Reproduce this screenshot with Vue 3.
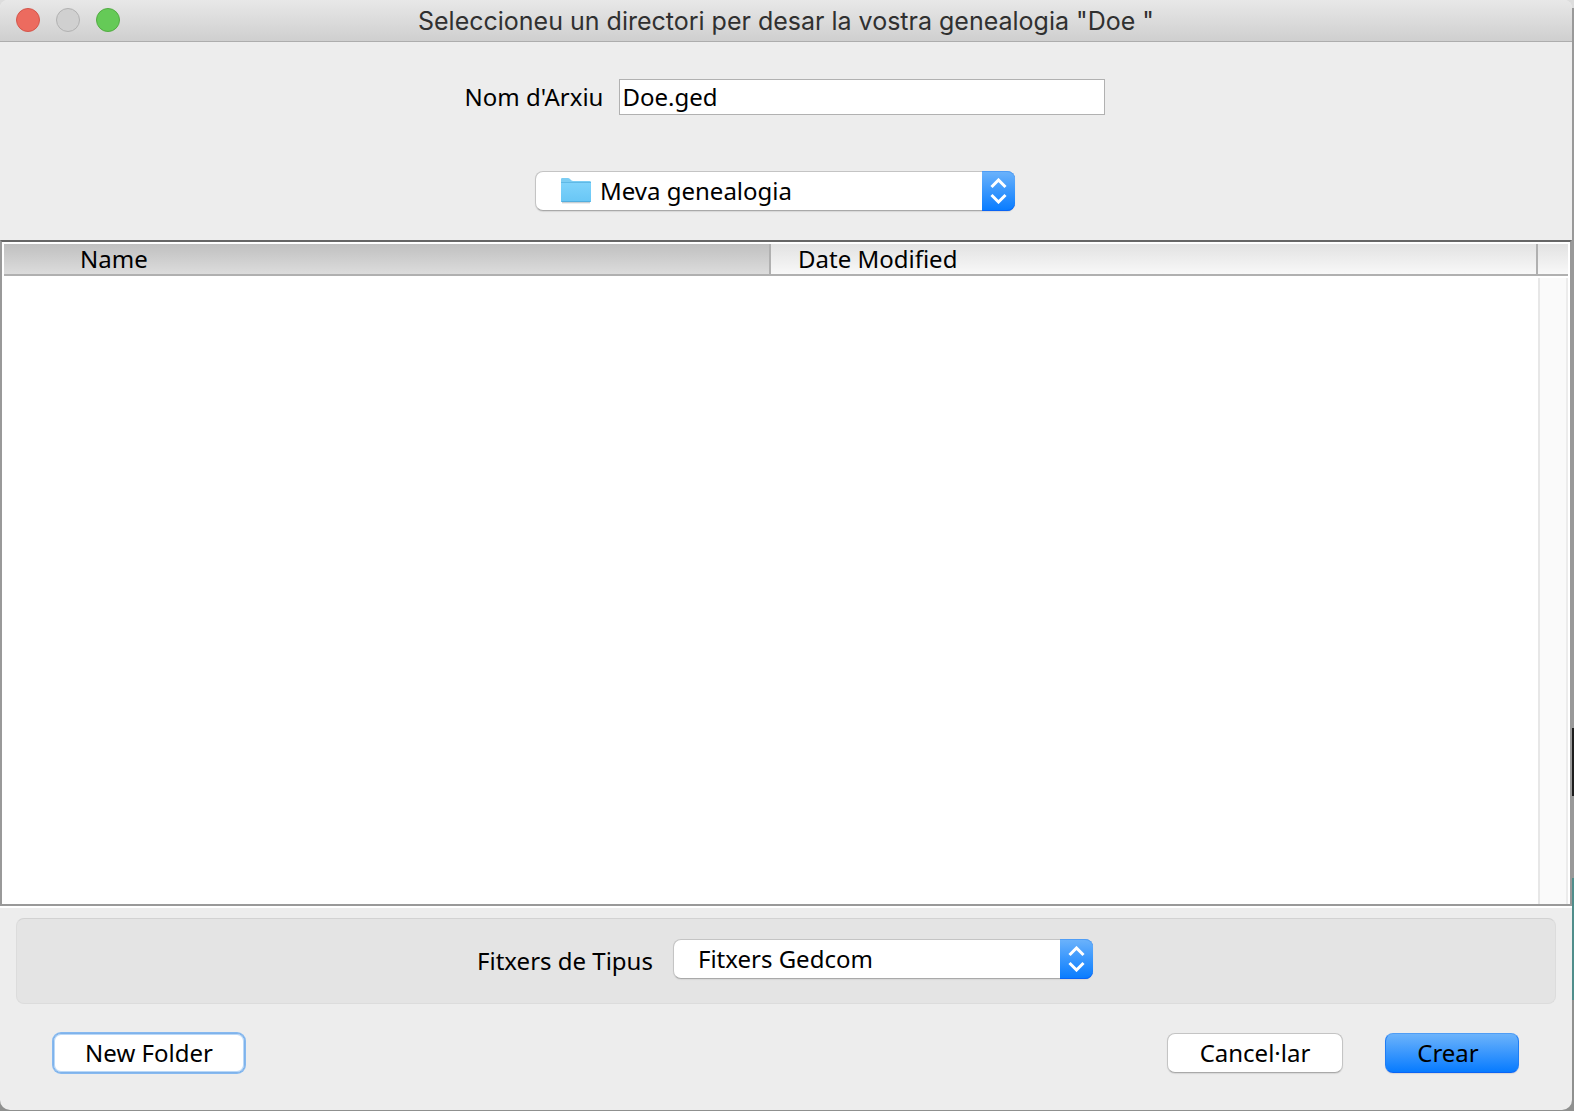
<script setup>
import { ref } from 'vue'

const fileName = ref('Doe.ged')
const folder = ref('Meva genealogia')
const fileType = ref('Fitxers Gedcom')
</script>

<template>
  <div class="desktop">
    <main class="dialog">
      <header class="titlebar">
        <div class="lights">
          <button class="light close" aria-label="Close"></button>
          <button class="light minimize" aria-label="Minimize" disabled></button>
          <button class="light zoom" aria-label="Zoom"></button>
        </div>
        <h1 class="title">Seleccioneu un directori per desar la vostra genealogia "Doe "</h1>
      </header>

      <div class="name-row">
        <label for="file-name">Nom d'Arxiu</label>
        <input id="file-name" v-model="fileName" class="name-input" type="text" />
      </div>

      <div class="folder-row">
        <div class="combo folder-combo">
          <select v-model="folder" aria-label="Folder">
            <option>Meva genealogia</option>
          </select>
          <svg class="folder-icon" width="32" height="26" viewBox="0 0 32 26" aria-hidden="true">
            <defs>
              <linearGradient id="folder-face" x1="0" y1="0" x2="0" y2="1">
                <stop offset="0" stop-color="#7fd3fb" />
                <stop offset="1" stop-color="#68c6f5" />
              </linearGradient>
            </defs>
            <path d="M2 24.6h28" stroke="#c9cfd3" stroke-width="1.5" />
            <path d="M1 23V1.200Q1 0 2.200 0H8q1 0 1.800.8l1.400 1.400q.8.8 2 .8H29.500Q31 3 31 4.200V23q0 1-1 1H2q-1 0-1-1z" fill="#7ccdf3" />
            <path d="M1 4.500h30V23q0 1-1 1H2q-1 0-1-1z" fill="url(#folder-face)" />
            <path d="M1 4.500h30" stroke="#5fb9e6" />
            <path d="M1.500 23.500h29" stroke="#52aede" />
          </svg>
          <span class="arrows">
            <svg width="17" height="26" viewBox="0 0 17 26" aria-hidden="true">
              <path d="M1.500 9 8.500 2 15.500 9M1.500 17 8.500 24 15.500 17" />
            </svg>
          </span>
        </div>
      </div>

      <section class="list">
        <table>
          <colgroup>
            <col />
            <col />
            <col class="corner" />
          </colgroup>
          <thead>
            <tr>
              <th class="sorted" scope="col">Name</th>
              <th class="date" scope="col">Date Modified</th>
              <td></td>
            </tr>
          </thead>
        </table>
        <div class="files">
          <div class="track"></div>
        </div>
      </section>

      <section class="type-panel">
        <label for="file-type">Fitxers de Tipus</label>
        <div class="combo type-combo">
          <select id="file-type" v-model="fileType">
            <option>Fitxers Gedcom</option>
          </select>
          <span class="arrows">
            <svg width="17" height="26" viewBox="0 0 17 26" aria-hidden="true">
              <path d="M1.500 9 8.500 2 15.500 9M1.500 17 8.500 24 15.500 17" />
            </svg>
          </span>
        </div>
      </section>

      <footer class="actions">
        <button class="btn new-folder">New Folder</button>
        <button class="btn cancel">Cancel·lar</button>
        <button class="btn create">Crear</button>
      </footer>
    </main>
  </div>
</template>

<style>
body {
  margin: 0;
}
</style>

<style scoped>
.desktop {
  display: flex;
  min-height: 100vh;
  box-sizing: border-box;
  padding: 0 2px 1px 0;
  background: linear-gradient(
    #ddd 0 8px,
    #999 8px 728px,
    #1c1c1c 728px 796px,
    #999 796px 878px,
    #4f8d8b 878px 1000px,
    #8f908f 1000px
  );
  font-family: "Noto Sans", "Open Sans", sans-serif;
  font-size: 24px;
  line-height: 32px;
  color: #000;
}

.dialog {
  flex: 1;
  min-width: 0;
  display: flex;
  flex-direction: column;
  background: #ededed;
  border-radius: 8px 8px 10px 10px;
  overflow: hidden;
}

.titlebar {
  display: grid;
  grid-template-columns: 120px 1fr 120px;
  align-items: center;
  height: 42px;
  box-sizing: border-box;
  padding: 0 0 1px;
  background: linear-gradient(#e8e8e8, #cfcfcf);
  border-bottom: 1px solid #adadad;
}

.lights {
  display: flex;
  gap: 16px;
  padding-left: 16px;
}

.light {
  width: 24px;
  height: 24px;
  padding: 0;
  border-radius: 50%;
  border: 1px solid;
}

.close {
  background: #ec6b5f;
  border-color: #d3564b;
}

.minimize {
  background: #d0d0d0;
  border-color: #b1b1b1;
}

.zoom {
  background: #65ca57;
  border-color: #53ab43;
}

.title {
  margin: 0;
  padding-top: 2px;
  text-align: center;
  font-family: Inter, Roboto, sans-serif;
  font-size: 25px;
  line-height: 32px;
  font-weight: 400;
  color: #303030;
  white-space: nowrap;
}

.name-row {
  display: flex;
  justify-content: center;
  align-items: center;
  gap: 16px;
  padding: 37px 2px 0 0;
}

.name-input {
  width: 486px;
  height: 36px;
  box-sizing: border-box;
  padding: 0 2px 2px;
  border: 1px solid #b1b1b1;
  border-radius: 0;
  background: #fff;
  color: #000;
  font: inherit;
  outline: none;
}

.folder-row {
  display: flex;
  justify-content: center;
  padding: 56px 22px 29px 0;
}

.combo {
  position: relative;
  height: 40px;
}

.folder-combo {
  width: 480px;
}

.type-combo {
  width: 420px;
}

.combo select {
  appearance: none;
  display: block;
  width: 100%;
  height: 40px;
  box-sizing: border-box;
  padding: 0 40px 0 24px;
  border: 1px solid #c4c4c4;
  border-bottom-color: #a9a9a9;
  border-radius: 8px;
  background: #fff;
  box-shadow: 0 1px 1px #d6d6d6;
  color: #000;
  font: inherit;
  outline: none;
}

.folder-combo select {
  padding-left: 64px;
}

.folder-icon {
  position: absolute;
  left: 25px;
  top: 7px;
  pointer-events: none;
}

.arrows {
  position: absolute;
  top: 0;
  right: 0;
  bottom: 0;
  width: 33px;
  display: flex;
  align-items: center;
  justify-content: center;
  box-sizing: border-box;
  border-radius: 0 8px 8px 0;
  background: linear-gradient(#6cb3fb, #077bff);
  box-shadow: inset 0 -1px #0a64f5, inset 0 1px #4f9df5;
  pointer-events: none;
}

.arrows path {
  fill: none;
  stroke: #fff;
  stroke-width: 3;
}

.list {
  flex: 1;
  display: flex;
  flex-direction: column;
  box-sizing: border-box;
  border: 2px solid #999;
  border-top-color: #666;
  background: #fff;
  box-shadow: 0 2px #fff;
  padding-top: 2px;
}

table {
  table-layout: fixed;
  width: calc(100% - 4px);
  margin: 0 2px;
  border-collapse: separate;
  border-spacing: 0;
}

.corner {
  width: 30px;
}

th,
td {
  height: 32px;
  box-sizing: border-box;
  padding: 0;
  border-bottom: 2px solid #b0b0b0;
  background: linear-gradient(#e2e2e2, #f8f8f8);
  font-weight: 400;
  line-height: 30px;
  text-align: left;
}

th {
  padding-left: 27px;
  border-right: 2px solid #b0b0b0;
}

th.sorted {
  padding-left: 76px;
  background: linear-gradient(#c0c0c0, #dcdcdc);
}

.files {
  flex: 1;
  display: flex;
  justify-content: flex-end;
  padding: 2px 2px 0 0;
}

.track {
  width: 30px;
  box-sizing: border-box;
  border-left: 2px solid #e7e7e7;
  border-right: 2px solid #ececec;
  background: #fafafa;
}

.type-panel {
  display: flex;
  justify-content: center;
  align-items: center;
  gap: 20px;
  height: 86px;
  box-sizing: border-box;
  margin: 12px 16px 0;
  padding: 0 2px 4px 0;
  border: 1px solid #dcdcdc;
  border-top-color: #d2d2d2;
  border-radius: 8px;
  background: #e4e4e4;
}

.type-panel label {
  padding-top: 4px;
}

.actions {
  display: flex;
  align-items: center;
  gap: 42px;
  padding: 29px 53px 37px;
}

.btn {
  height: 40px;
  box-sizing: border-box;
  padding: 0;
  border: 1px solid #c4c4c4;
  border-bottom-color: #a9a9a9;
  border-radius: 8px;
  background: #fff;
  box-shadow: 0 1px 1px #d6d6d6;
  color: #000;
  font: inherit;
  line-height: 32px;
}

.new-folder {
  width: 192px;
  margin-right: auto;
  border: 1px solid #7fb2ea;
  box-shadow: 0 0 0 1px #86b9f0, inset 0 0 0 1px #b9d8f8;
}

.cancel {
  width: 176px;
}

.create {
  width: 134px;
  padding-right: 8px;
  border-color: #4f9df5 #1f7df5 #0a64f5;
  background: linear-gradient(#6cb3fb, #077bff);
}
</style>
